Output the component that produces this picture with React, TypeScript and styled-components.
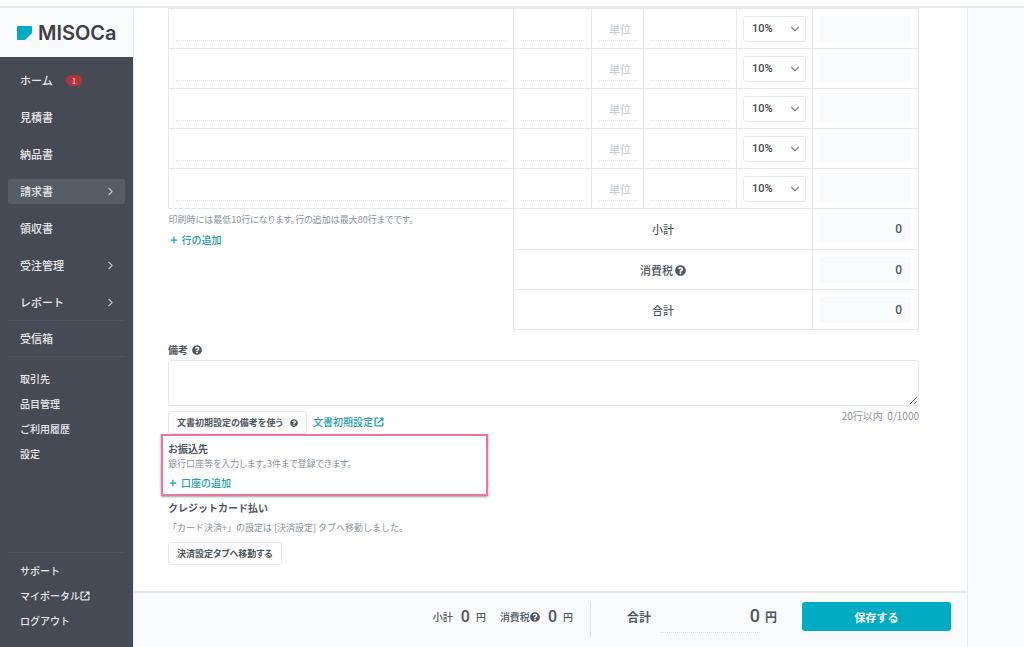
import React from "react";
import styled, { createGlobalStyle, css } from "styled-components";
import { FaQuestionCircle } from "react-icons/fa";
import { ChevronDown, ChevronRight, Plus } from "lucide-react";

const color = {
  ink: "#50565f",
  muted: "#8b929b",
  line: "#e5e9ed",
  panel: "#f9fafc",
  teal: "#00acc4",
  link: "#1b9fb2",
  nav: "#464a54",
  navActive: "#575d66",
  navLine: "#50555f",
  navText: "#e6e8ea",
  pink: "#ee73a0",
};

const GlobalStyle = createGlobalStyle`
  * { box-sizing: border-box; }
  body {
    margin: 0;
    background: #fff;
    color: ${color.ink};
    font-family: "Noto Sans CJK JP", "Noto Sans", sans-serif;
    font-size: 11px;
    line-height: 16px;
  }
  button, input, select, textarea { font: inherit; color: inherit; }
`;

const Page = styled.div`
  display: flex;
  flex-direction: column;
  min-height: 100vh;
`;

const TopStrip = styled.div`
  height: 8px;
  border-bottom: 2px solid #e8ebef;
`;

const Columns = styled.div`
  flex: 1;
  display: flex;
`;

const Sidebar = styled.aside`
  flex: none;
  display: flex;
  flex-direction: column;
  width: 133px;
  background: ${color.nav};
  color: ${color.navText};
`;

const Logo = styled.a`
  display: flex;
  align-items: center;
  gap: 6px;
  height: 49px;
  padding: 0 17px;
  background: ${color.panel};
  color: #3c4047;
  font-family: Inter, sans-serif;
  font-size: 20px;
  font-weight: 600;
  text-decoration: none;
  svg { flex: none; }
`;

const Nav = styled.nav`
  flex: 1;
  display: flex;
  flex-direction: column;
  padding: 11px 8px 13px;
`;

const NavList = styled.ul<{ $small?: boolean }>`
  display: flex;
  flex-direction: column;
  gap: ${(p) => (p.$small ? 0 : 12)}px;
  margin: 0;
  padding: 0;
  list-style: none;
  font-size: ${(p) => (p.$small ? 10 : 11)}px;
  font-weight: 500;
`;

const NavLink = styled.a<{ $active?: boolean }>`
  display: flex;
  align-items: center;
  height: 25px;
  padding: 0 8px 1px 12px;
  border-radius: 3px;
  background: ${(p) => (p.$active ? color.navActive : "transparent")};
  color: inherit;
  text-decoration: none;
  white-space: nowrap;
`;

const NavArrow = styled(ChevronRight)`
  margin-left: auto;
  color: #c3c6cb;
`;

const Badge = styled.span`
  margin-left: 13px;
  padding: 0 6px;
  border-radius: 6px;
  background: #b2353c;
  color: #f6b9cf;
  font-size: 8px;
  line-height: 11px;
`;

const NavDivider = styled.hr<{ $bottom?: boolean }>`
  width: 100%;
  margin: ${(p) => (p.$bottom ? "auto 0 6px" : "5px 0")};
  border: 0;
  border-top: 1px solid ${color.navLine};
`;

const InboxDivider = styled(NavDivider)`
  margin-bottom: 10px;
`;

const Main = styled.main`
  flex: 1;
  display: flex;
  flex-direction: column;
  min-width: 0;
  border: solid #e8ebef;
  border-width: 0 1px 0 1px;
`;

const Gutter = styled.div`
  flex: none;
  width: 56px;
  background: ${color.panel};
`;

const Form = styled.form`
  flex: 1;
  padding: 0 48px 26px 34px;
`;

const ItemTable = styled.table`
  width: 100%;
  table-layout: fixed;
  border-collapse: collapse;
`;

const Col = styled.col<{ $w?: number }>`
  width: ${(p) => (p.$w ? `${p.$w}px` : "auto")};
`;

const Row = styled.tr<{ $first?: boolean }>`
  height: ${(p) => (p.$first ? 41 : 40)}px;
`;

const Cell = styled.td`
  padding: 0 7px;
  border: 1px solid ${color.line};
`;

const SelectCell = styled(Cell)`
  padding: 0 6px;
`;

const TotalLabel = styled.th`
  padding: 0;
  border: 1px solid ${color.line};
  font-weight: 500;
  svg { vertical-align: -1px; margin-left: 2px; }
`;

const NoteCell = styled.td`
  padding: 3px 0 0;
  vertical-align: top;
`;

const LineInput = styled.input`
  display: block;
  width: 100%;
  height: 24px;
  padding: 2px 0 0;
  border: 0;
  border-bottom: 1px dotted #e0e4e7;
  background: transparent;
  text-align: right;
  &::placeholder { color: #c9cfd7; opacity: 1; }
`;

const UnitInput = styled(LineInput)`
  padding: 2px 5px 0;
  font-weight: 500;
`;

const SelectBox = styled.span`
  position: relative;
  display: block;
  svg {
    position: absolute;
    top: 6px;
    right: 4px;
    color: #7c828c;
    pointer-events: none;
  }
`;

const TaxSelect = styled.select`
  display: block;
  width: 100%;
  height: 26px;
  padding: 0 8px;
  border: 1px solid ${color.line};
  border-radius: 3px;
  background: #fff;
  appearance: none;
  font-family: Roboto, sans-serif;
  font-weight: 500;
  color: #3f444d;
`;

const Amount = styled.output`
  display: block;
  height: 26px;
  padding: 0 9px;
  border-radius: 3px;
  background: ${color.panel};
  font-family: Roboto, sans-serif;
  font-size: 12px;
  font-weight: 500;
  line-height: 26px;
  text-align: right;
`;

const Hint = styled.p`
  margin: 0;
  color: ${color.muted};
  font-size: 9px;
  font-feature-settings: "palt";
`;

const TextLink = styled.a`
  display: inline-flex;
  align-items: center;
  gap: 1px;
  color: ${color.link};
  font-size: 10px;
  font-weight: 500;
  line-height: 16px;
  text-decoration: none;
`;

const AddButton = styled.button`
  display: flex;
  align-items: center;
  gap: 3px;
  margin: 4px 0 0;
  padding: 0;
  border: 0;
  background: none;
  color: ${color.link};
  font-size: 10px;
  font-weight: 500;
  line-height: 16px;
`;

const Heading = styled.h2`
  margin: 0;
  font-size: 10px;
  font-weight: 700;
  line-height: 16px;
`;

const RemarksLabel = styled.label`
  display: flex;
  align-items: center;
  gap: 4px;
  margin-top: 12px;
  padding-bottom: 2px;
  font-size: 10px;
  font-weight: 700;
`;

const Remarks = styled.textarea`
  display: block;
  width: 100%;
  height: 46px;
  border: 1px solid ${color.line};
  border-radius: 3px;
  background: #fff;
  resize: vertical;
`;

const RemarksTools = styled.div`
  display: flex;
  align-items: flex-start;
  gap: 6px;
  padding-top: 5px;
  ${TextLink} { margin-top: 3px; }
  ${Hint} { margin: -3px 0 0 auto; font-size: 10px; }
`;

const SmallButton = styled.button`
  display: flex;
  align-items: center;
  gap: 7px;
  height: 23px;
  padding: 0 8px;
  border: 1px solid ${color.line};
  border-radius: 3px;
  background: #fff;
  font-size: 9px;
  font-weight: 700;
  font-feature-settings: "palt";
`;

const BankSection = styled.section`
  max-width: 327px;
  height: 62px;
  margin-left: -7px;
  padding: 5px;
  border: 2px solid ${color.pink};
  box-shadow: 0 1px 2px rgba(60, 60, 70, 0.5);
  ${Hint} { line-height: 14px; }
`;

const CardSection = styled.section`
  padding-top: 4px;
  ${Hint} {
    margin: 4px 0 6px;
    font-feature-settings: normal;
  }
`;

const Footer = styled.footer`
  display: flex;
  justify-content: flex-end;
  align-items: flex-start;
  height: 56px;
  padding: 9px 16px 0;
  border-top: 2px solid ${color.line};
  background: ${color.panel};
`;

const Figure = styled.div<{ $large?: boolean }>`
  display: flex;
  align-items: center;
  height: 30px;
  font-size: 10px;
  font-weight: 500;
  ${(p) =>
    p.$large &&
    css`
      font-size: 12px;
      font-weight: 700;
    `}
`;

const Digits = styled.span`
  margin: 0 6px 0 8px;
  font-family: Roboto, sans-serif;
  font-size: 16px;
  font-weight: 500;
`;

const GrandTotal = styled.output`
  width: 100px;
  height: 32px;
  margin: 0 5px 0 9px;
  border-bottom: 1px dotted #dadde1;
  font-family: Roboto, sans-serif;
  font-size: 18px;
  font-weight: 500;
  line-height: 30px;
  text-align: right;
`;

const Figures = styled.div`
  display: flex;
  gap: 14px;
  height: 35px;
  margin-right: 36px;
  padding-right: 17px;
  border-right: 1px solid #dfe3e7;
`;

const SaveButton = styled.button`
  width: 149px;
  height: 29px;
  margin-left: 25px;
  border: 0;
  border-radius: 3px;
  background: ${color.teal};
  color: #fff;
  font-weight: 700;
`;

const OutsideIcon = () => (
  <svg width="10" height="10" viewBox="0 0 10 10" fill="none" stroke="currentColor" strokeWidth="1.3" aria-hidden="true">
    <path d="M4.4 1.1H1.7a.6.6 0 0 0-.6.6v6.6c0 .3.3.6.6.6h6.6c.3 0 .6-.3.6-.6V5.6" />
    <path d="M5.8 1.1h3.1v3.1M8.8 1.2 3.6 6.4" />
  </svg>
);

const mainNav: { label: string; badge?: number; active?: boolean; more?: boolean }[] = [
  { label: "ホーム", badge: 1 },
  { label: "見積書" },
  { label: "納品書" },
  { label: "請求書", active: true, more: true },
  { label: "領収書" },
  { label: "受注管理", more: true },
  { label: "レポート", more: true },
];
const settingsNav = ["取引先", "品目管理", "ご利用履歴", "設定"];
const rows = [1, 2, 3, 4, 5];

export default function App() {
  return (
    <Page lang="ja">
      <GlobalStyle />
      <TopStrip />
      <Columns>
        <Sidebar>
          <Logo href="#">
            <svg width="15" height="14" viewBox="0 0 15 14" aria-hidden="true">
              <path d="M1 0h13a1 1 0 0 1 1 1v6L8 14H1a1 1 0 0 1-1-1V1a1 1 0 0 1 1-1z" fill={color.teal} />
            </svg>
            MISOCa
          </Logo>
          <Nav>
            <NavList>
              {mainNav.map((item) => (
                <li key={item.label}>
                  <NavLink href="#" $active={item.active}>
                    {item.label}
                    {item.badge && <Badge>{item.badge}</Badge>}
                    {item.more && <NavArrow size={13} />}
                  </NavLink>
                </li>
              ))}
            </NavList>
            <NavDivider />
            <NavList>
              <li>
                <NavLink href="#">受信箱</NavLink>
              </li>
            </NavList>
            <InboxDivider />
            <NavList $small>
              {settingsNav.map((label) => (
                <li key={label}>
                  <NavLink href="#">{label}</NavLink>
                </li>
              ))}
            </NavList>
            <NavDivider $bottom />
            <NavList $small>
              <li>
                <NavLink href="#">サポート</NavLink>
              </li>
              <li>
                <NavLink href="#">
                  マイポータル
                  <OutsideIcon />
                </NavLink>
              </li>
              <li>
                <NavLink href="#">ログアウト</NavLink>
              </li>
            </NavList>
          </Nav>
        </Sidebar>

        <Main>
          <Form>
            <ItemTable>
              <colgroup>
                <Col />
                <Col $w={78} />
                <Col $w={52} />
                <Col $w={93} />
                <Col $w={76} />
                <Col $w={106} />
              </colgroup>
              <tbody>
                {rows.map((n) => (
                  <Row key={n}>
                    <Cell><LineInput aria-label={`品目 ${n}`} /></Cell>
                    <Cell><LineInput aria-label={`数量 ${n}`} /></Cell>
                    <Cell><UnitInput aria-label={`単位 ${n}`} placeholder="単位" /></Cell>
                    <Cell><LineInput aria-label={`単価 ${n}`} /></Cell>
                    <SelectCell>
                      <SelectBox>
                        <TaxSelect aria-label={`税率 ${n}`}>
                          <option>10%</option>
                        </TaxSelect>
                        <ChevronDown size={14} />
                      </SelectBox>
                    </SelectCell>
                    <Cell><Amount /></Cell>
                  </Row>
                ))}
              </tbody>
              <tfoot>
                <Row $first>
                  <NoteCell rowSpan={3}>
                    <Hint>印刷時には最低10行になります。行の追加は最大80行までです。</Hint>
                    <AddButton type="button"><Plus size={10} strokeWidth={3} />行の追加</AddButton>
                  </NoteCell>
                  <TotalLabel colSpan={4} scope="row">小計</TotalLabel>
                  <Cell><Amount>0</Amount></Cell>
                </Row>
                <Row>
                  <TotalLabel colSpan={4} scope="row">消費税<FaQuestionCircle size={11} /></TotalLabel>
                  <Cell><Amount>0</Amount></Cell>
                </Row>
                <Row>
                  <TotalLabel colSpan={4} scope="row">合計</TotalLabel>
                  <Cell><Amount>0</Amount></Cell>
                </Row>
              </tfoot>
            </ItemTable>

            <RemarksLabel htmlFor="remarks">備考<FaQuestionCircle size={10} /></RemarksLabel>
            <Remarks id="remarks" />
            <RemarksTools>
              <SmallButton type="button">文書初期設定の備考を使う<FaQuestionCircle size={8} /></SmallButton>
              <TextLink href="#">文書初期設定<OutsideIcon /></TextLink>
              <Hint>20行以内&nbsp; 0/1000</Hint>
            </RemarksTools>

            <BankSection>
              <Heading>お振込先</Heading>
              <Hint>銀行口座等を入力します。3件まで登録できます。</Hint>
              <AddButton type="button"><Plus size={10} strokeWidth={3} />口座の追加</AddButton>
            </BankSection>

            <CardSection>
              <Heading>クレジットカード払い</Heading>
              <Hint>「カード決済+」の設定は [決済設定] タブへ移動しました。</Hint>
              <SmallButton type="button">決済設定タブへ移動する</SmallButton>
            </CardSection>
          </Form>

          <Footer>
            <Figures>
              <Figure>小計<Digits>0</Digits>円</Figure>
              <Figure>消費税<FaQuestionCircle size={10} /><Digits>0</Digits>円</Figure>
            </Figures>
            <Figure $large>合計<GrandTotal>0</GrandTotal>円</Figure>
            <SaveButton type="button">保存する</SaveButton>
          </Footer>
        </Main>
        <Gutter />
      </Columns>
    </Page>
  );
}
